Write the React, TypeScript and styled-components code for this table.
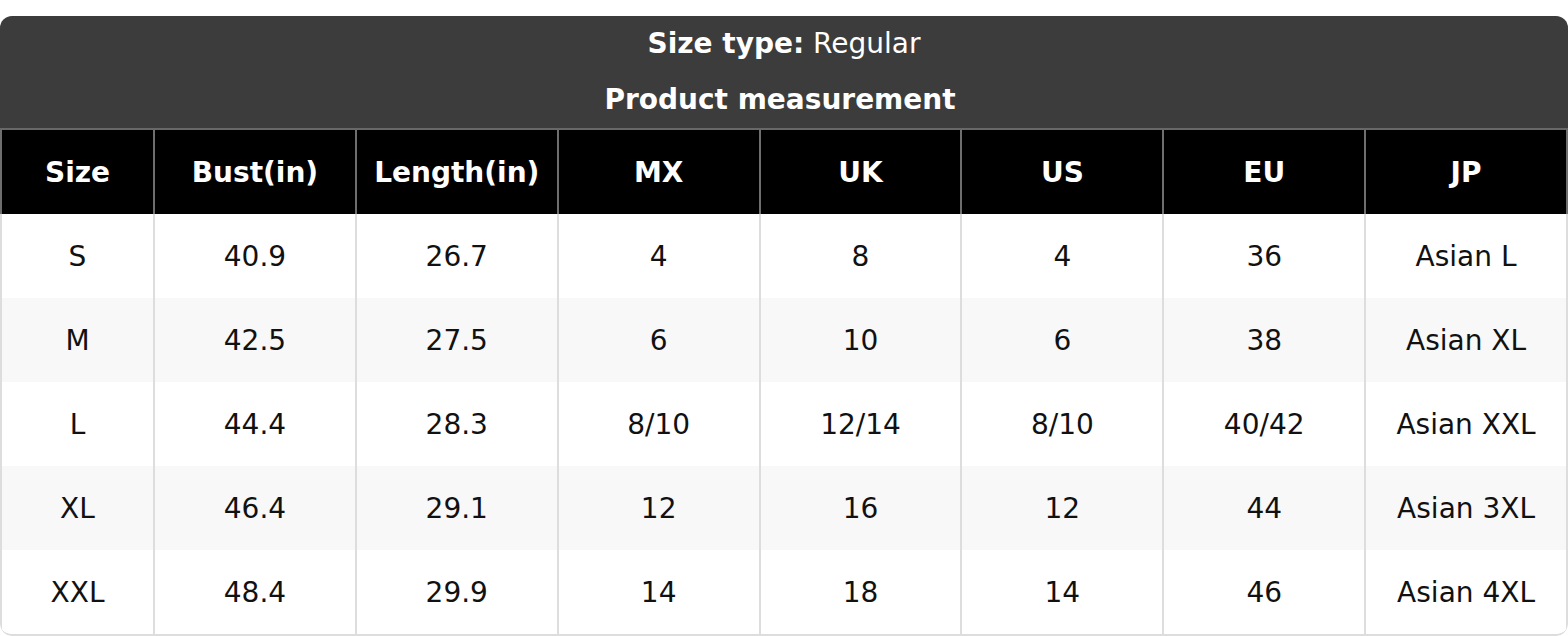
import styled, { createGlobalStyle } from 'styled-components';

const GlobalStyle = createGlobalStyle`
  html, body {
    margin: 0;
    padding: 0;
    background: #ffffff;
  }
  body {
    font-family: 'DejaVu Sans', 'Liberation Sans', sans-serif;
  }
`;

const Page = styled.div`
  width: 1568px;
  padding-top: 16px;
`;

const Card = styled.div`
  border-radius: 12px;
  overflow: hidden;
  background: #ffffff;
`;

const Caption = styled.div`
  background: #3c3c3c;
  color: #ffffff;
  text-align: center;
  font-size: 28px;
`;

const CaptionLine = styled.div<{ $shift?: number }>`
  height: 56px;
  line-height: 56px;
  white-space: nowrap;
  padding-right: ${({ $shift }) => $shift ?? 0}px;
`;

const Grid = styled.div`
  display: grid;
  grid-template-columns: 155px repeat(7, 1fr);
  border-top: 2px solid #686868;
  border-bottom: 2px solid #dddddd;
  border-radius: 0 0 12px 12px;
  overflow: hidden;
`;

const Cell = styled.div<{ $head?: boolean; $striped?: boolean; $first?: boolean }>`
  height: 84px;
  display: flex;
  align-items: center;
  justify-content: center;
  font-size: 28px;
  white-space: nowrap;
  font-weight: ${({ $head }) => ($head ? 700 : 400)};
  color: ${({ $head }) => ($head ? '#ffffff' : '#111111')};
  background: ${({ $head, $striped }) =>
    $head ? '#000000' : $striped ? '#f8f8f8' : '#ffffff'};
  border-right: 2px solid ${({ $head }) => ($head ? '#6e6e6e' : '#dddddd')};
  border-left: ${({ $first, $head }) =>
    $first ? `2px solid ${$head ? '#6e6e6e' : '#dddddd'}` : 'none'};
`;

const columns = ['Size', 'Bust(in)', 'Length(in)', 'MX', 'UK', 'US', 'EU', 'JP'];

const rows = [
  ['S', '40.9', '26.7', '4', '8', '4', '36', 'Asian L'],
  ['M', '42.5', '27.5', '6', '10', '6', '38', 'Asian XL'],
  ['L', '44.4', '28.3', '8/10', '12/14', '8/10', '40/42', 'Asian XXL'],
  ['XL', '46.4', '29.1', '12', '16', '12', '44', 'Asian 3XL'],
  ['XXL', '48.4', '29.9', '14', '18', '14', '46', 'Asian 4XL'],
];

export default function App() {
  return (
    <>
      <GlobalStyle />
      <Page>
        <Card>
          <Caption>
            <CaptionLine>
              <b>Size type:</b> Regular
            </CaptionLine>
            <CaptionLine $shift={8}>
              <b>Product measurement</b>
            </CaptionLine>
          </Caption>
          <Grid>
            {columns.map((col, i) => (
              <Cell key={col} $head $first={i === 0}>
                {col}
              </Cell>
            ))}
            {rows.map((row, r) =>
              row.map((value, i) => (
                <Cell key={`${r}-${i}`} $striped={r % 2 === 1} $first={i === 0}>
                  {value}
                </Cell>
              ))
            )}
          </Grid>
        </Card>
      </Page>
    </>
  );
}
